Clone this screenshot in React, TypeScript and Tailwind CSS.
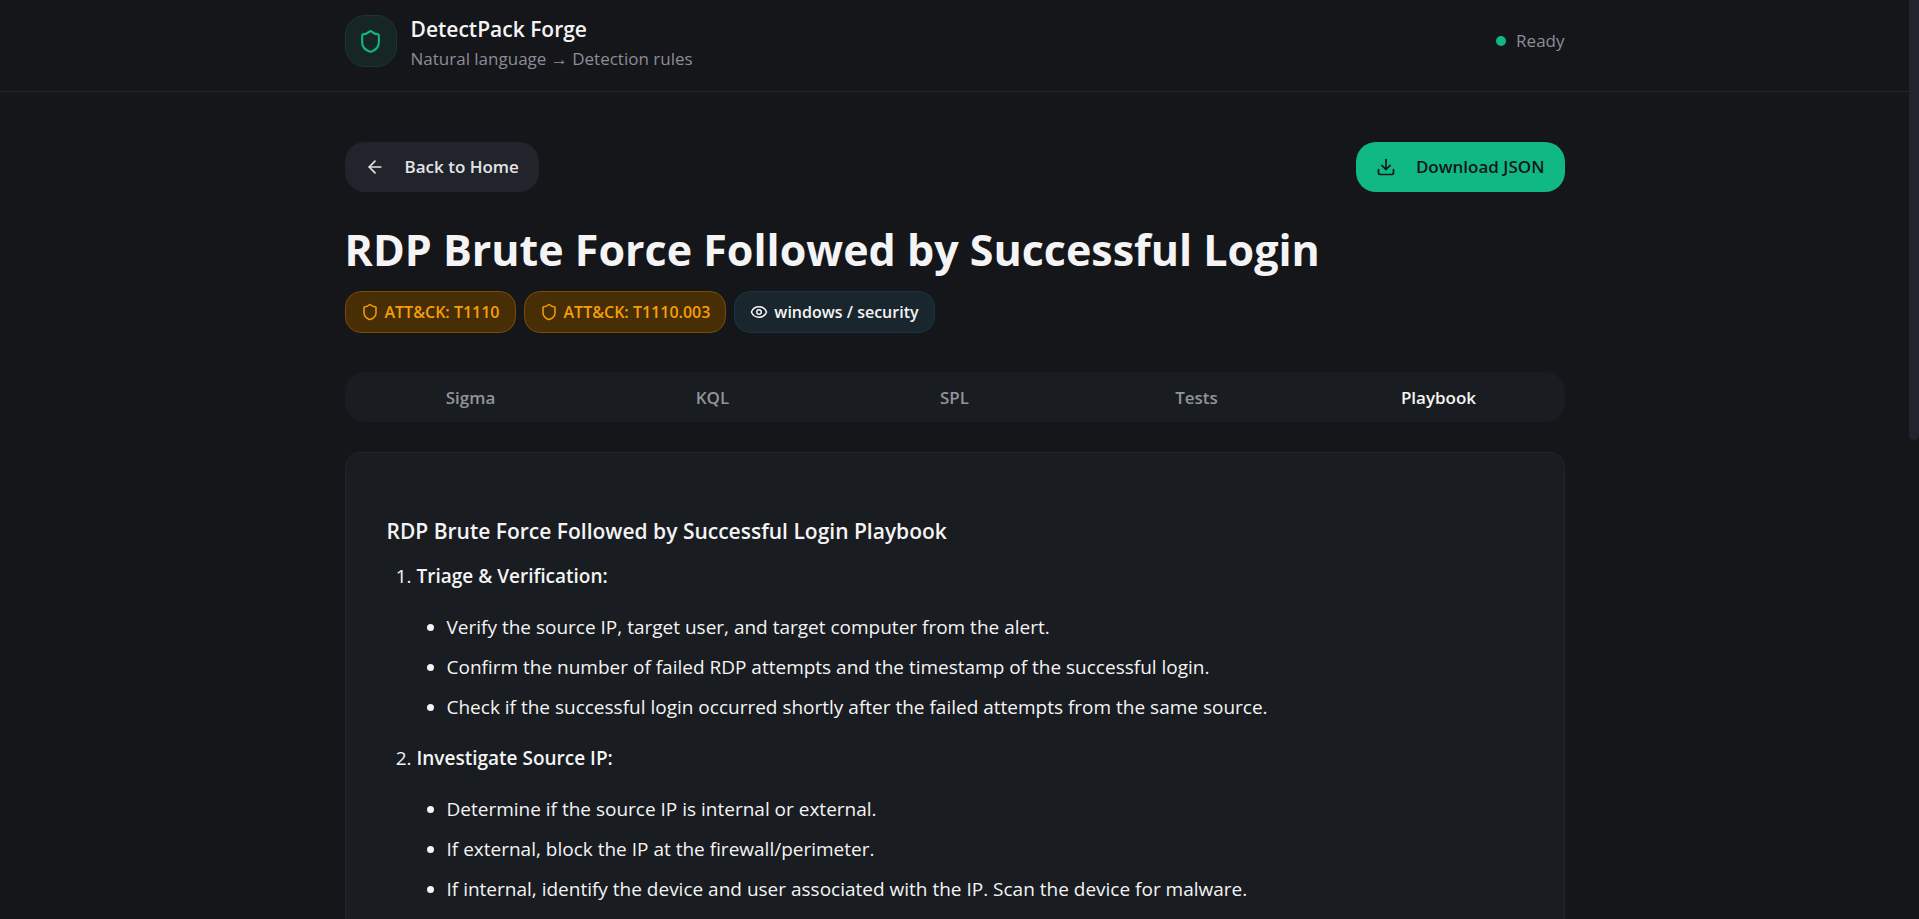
import { useState } from 'react';
import { ArrowLeft, Download, Eye, Shield } from 'lucide-react';

const TABS = ['Sigma', 'KQL', 'SPL', 'Tests', 'Playbook'];

const TECHNIQUES = ['T1110', 'T1110.003'];

interface PlaybookStep {
  title: string;
  items: string[];
}

const STEPS: PlaybookStep[] = [
  {
    title: 'Triage & Verification:',
    items: [
      'Verify the source IP, target user, and target computer from the alert.',
      'Confirm the number of failed RDP attempts and the timestamp of the successful login.',
      'Check if the successful login occurred shortly after the failed attempts from the same source.',
    ],
  },
  {
    title: 'Investigate Source IP:',
    items: [
      'Determine if the source IP is internal or external.',
      'If external, block the IP at the firewall/perimeter.',
      'If internal, identify the device and user associated with the IP. Scan the device for malware.',
    ],
  },
];

function Header() {
  return (
    <header className="border-b border-[#24262b]">
      <div className="mx-auto flex max-w-[1280px] items-center justify-between px-[30px] pt-2 pb-[17px]">
        <div className="flex items-center gap-[14px]">
          <div className="flex size-[52px] items-center justify-center rounded-[20px] border border-[#15382f] bg-[#162624]">
            <Shield className="size-[25px] text-[#10b981]" />
          </div>
          <div className="pt-[6px]">
            <div className="text-[21px] leading-[30px] font-semibold text-[#f4f4f5]">DetectPack Forge</div>
            <p className="text-[17px] leading-[30px] text-[#8b8d98]">Natural language → Detection rules</p>
          </div>
        </div>
        <div className="flex items-center gap-[10px] text-[17px] text-[#8b8d98]">
          <span className="size-[10px] rounded-full bg-[#10b981]" />
          Ready
        </div>
      </div>
    </header>
  );
}

function Tabs({ active, onSelect }: { active: string; onSelect: (tab: string) => void }) {
  return (
    <div role="tablist" className="mt-[39px] grid h-[50px] grid-cols-5 rounded-[20px] bg-[#191c20] p-[5px]">
      {TABS.map((tab) => (
        <button
          key={tab}
          type="button"
          role="tab"
          aria-selected={tab === active}
          onClick={() => onSelect(tab)}
          className={`rounded-2xl pt-[2px] text-[17px] font-semibold ${
            tab === active ? 'text-[#f4f4f5]' : 'text-[#8f959e]'
          }`}
        >
          {tab}
        </button>
      ))}
    </div>
  );
}

function Playbook() {
  return (
    <section className="mt-[30px] rounded-[15px] border border-[#212429] bg-[#191c20] px-[41px] pt-[61px] pb-20 text-[19px] leading-[30px] text-[#f4f4f5]">
      <h2 className="text-[21px] leading-[35px] font-semibold">
        RDP Brute Force Followed by Successful Login Playbook
      </h2>
      <ol className="mt-3 list-decimal pl-[30px]">
        {STEPS.map((step) => (
          <li key={step.title} className="mb-[21px]">
            <strong className="font-semibold">{step.title}</strong>
            <ul className="mt-[21px] list-disc pl-[30px]">
              {step.items.map((item) => (
                <li key={item} className="mb-[10px]">
                  {item}
                </li>
              ))}
            </ul>
          </li>
        ))}
      </ol>
    </section>
  );
}

export default function App() {
  const [tab, setTab] = useState('Playbook');

  return (
    <div className="flex h-screen overflow-hidden bg-[#15161a] font-['Open_Sans','Noto_Sans',sans-serif]">
      <div className="min-w-0 flex-1">
        <Header />
        <main className="mx-auto max-w-[1280px] px-[30px] pt-[50px]">
          <div className="flex items-center justify-between">
            <button
              type="button"
              className="flex h-[50px] items-center gap-5 rounded-[20px] bg-[#21242b] px-5 text-[17px] font-semibold text-[#e4e4e7]"
            >
              <ArrowLeft className="size-5" />
              Back to Home
            </button>
            <button
              type="button"
              className="flex h-[50px] items-center gap-5 rounded-[20px] bg-[#10b981] px-5 text-[17px] font-semibold text-[#15161a]"
            >
              <Download className="size-5" />
              Download JSON
            </button>
          </div>
          <h1 className="mt-[33px] text-[43px] leading-[50px] font-bold text-[#f4f4f5]">
            RDP Brute Force Followed by Successful Login
          </h1>
          <div className="mt-4 flex gap-2">
            {TECHNIQUES.map((id) => (
              <span
                key={id}
                className="flex h-[42px] items-center gap-[6px] rounded-2xl border border-[#784b08] bg-[#472e05] px-[15px] text-[16px] font-semibold text-[#f59e0b]"
              >
                <Shield className="size-[18px]" />
                ATT&amp;CK: {id}
              </span>
            ))}
            <span className="flex h-[42px] items-center gap-[6px] rounded-2xl border border-[#1b3542] bg-[#19262e] px-[15px] text-[16px] font-semibold text-[#f4f4f5]">
              <Eye className="size-[18px]" />
              windows / security
            </span>
          </div>
          <Tabs active={tab} onSelect={setTab} />
          <Playbook />
        </main>
      </div>
      <div className="w-[10px] shrink-0">
        <div className="h-[440px] rounded-b-full bg-[#21242d]" />
      </div>
    </div>
  );
}
